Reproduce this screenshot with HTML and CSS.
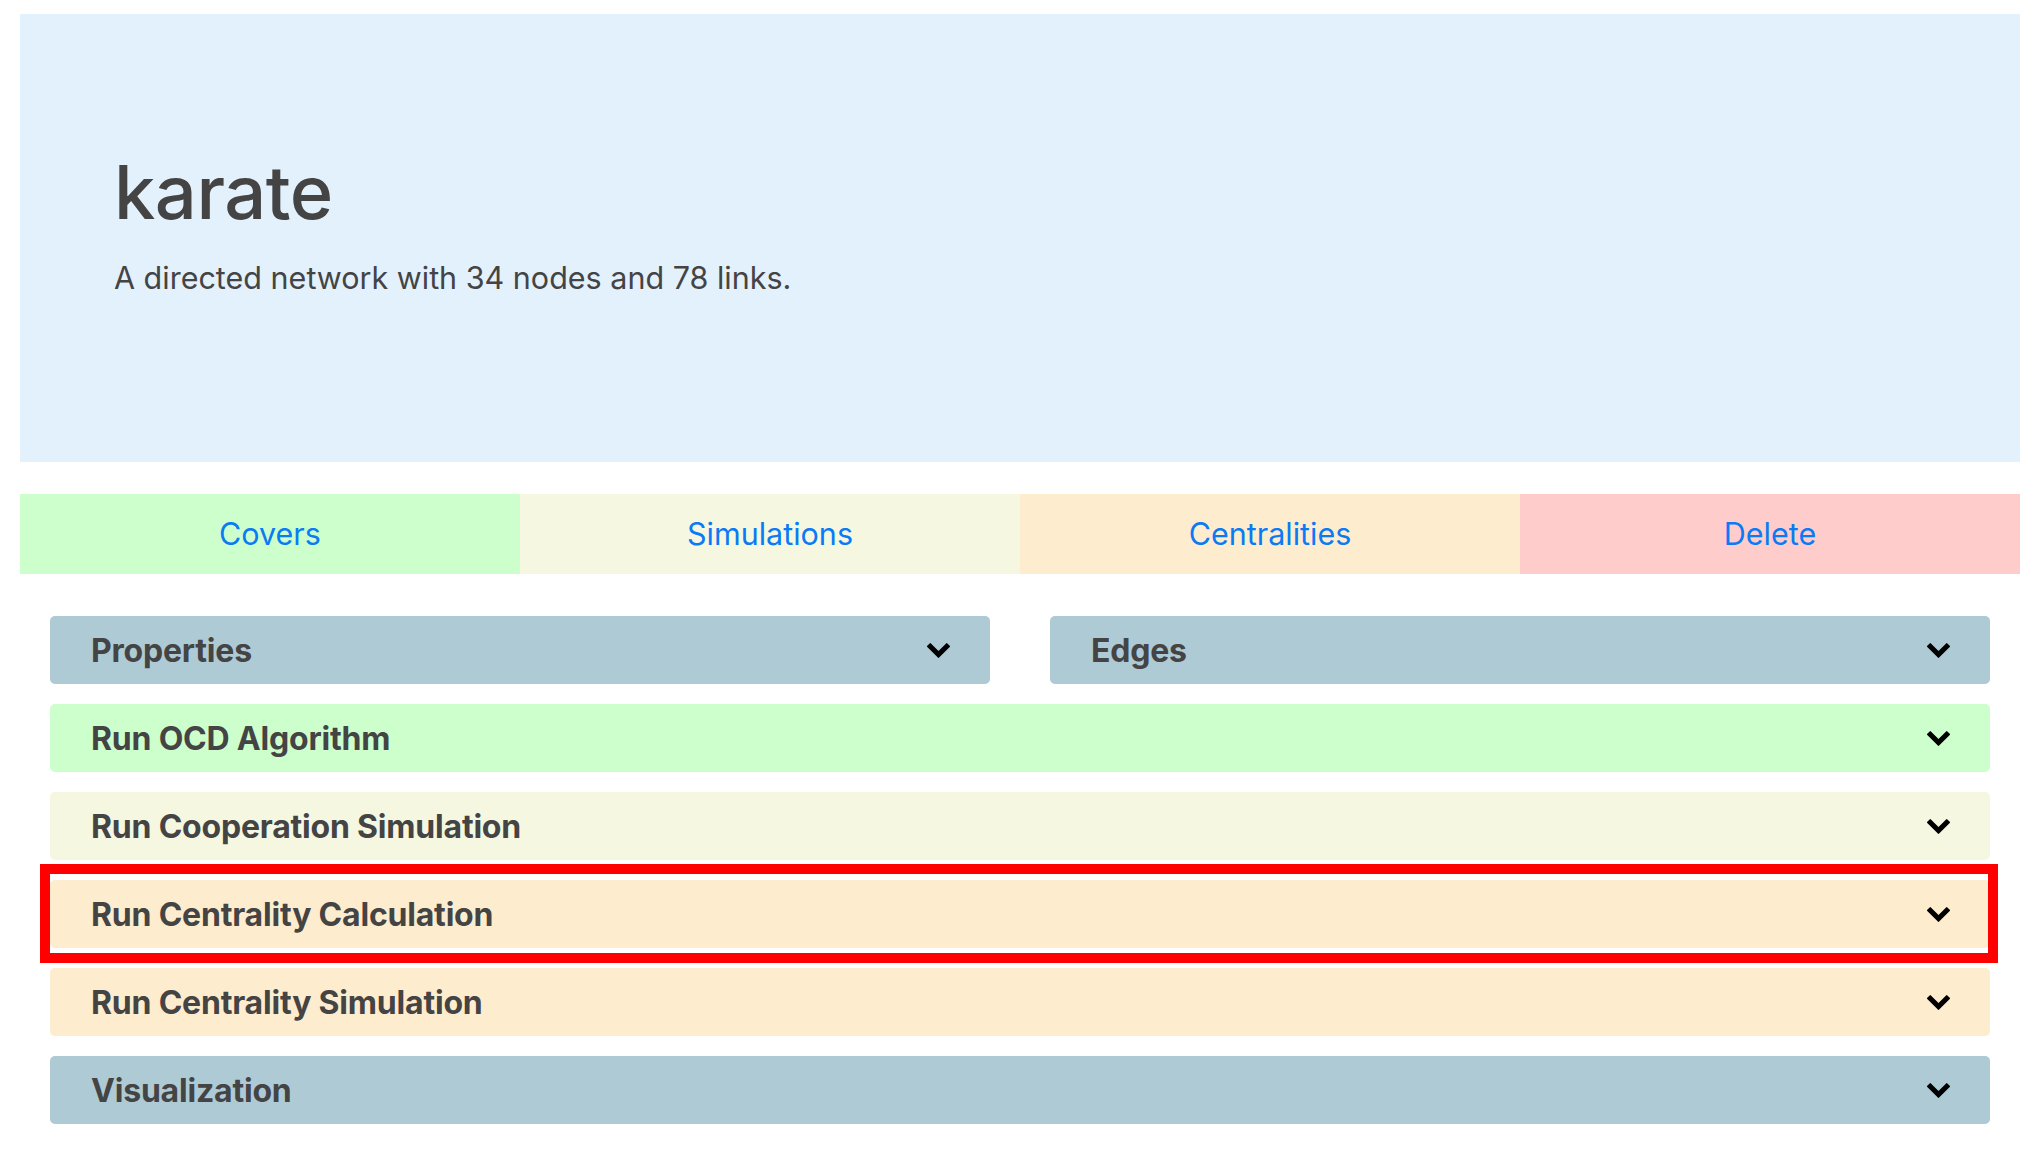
FILE: index.html
```html
<!DOCTYPE html>
<html lang="en">
<head>
<meta charset="utf-8">
<title>karate</title>
<link rel="stylesheet" href="styles.css">
</head>
<body>
<div class="page">
  <header class="jumbotron">
    <h1 class="title">karate</h1>
    <p class="lead">A directed network with 34 nodes and 78 links.</p>
  </header>

  <nav class="tabs">
    <a class="tab tab-covers" href="#">Covers</a>
    <a class="tab tab-sims" href="#">Simulations</a>
    <a class="tab tab-cent" href="#">Centralities</a>
    <a class="tab tab-delete" href="#">Delete</a>
  </nav>

  <main class="panels">
    <div class="pair">
      <div class="card card-grey"><span class="card-title">Properties</span><svg class="chev" viewBox="90 533 1612 1035"><path d="M1683 808l-742 741q-19 19-45 19t-45-19l-742-741q-19-19-19-45.5t19-45.5l166-165q19-19 45-19t45 19l531 531 531-531q19-19 45-19t45 19l166 165q19 19 19 45.5t-19 45.5z"/></svg></div>
      <div class="card card-grey"><span class="card-title">Edges</span><svg class="chev" viewBox="90 533 1612 1035"><path d="M1683 808l-742 741q-19 19-45 19t-45-19l-742-741q-19-19-19-45.5t19-45.5l166-165q19-19 45-19t45 19l531 531 531-531q19-19 45-19t45 19l166 165q19 19 19 45.5t-19 45.5z"/></svg></div>
    </div>
    <div class="card card-green"><span class="card-title">Run OCD Algorithm</span><svg class="chev" viewBox="90 533 1612 1035"><path d="M1683 808l-742 741q-19 19-45 19t-45-19l-742-741q-19-19-19-45.5t19-45.5l166-165q19-19 45-19t45 19l531 531 531-531q19-19 45-19t45 19l166 165q19 19 19 45.5t-19 45.5z"/></svg></div>
    <div class="card card-beige"><span class="card-title">Run Cooperation Simulation</span><svg class="chev" viewBox="90 533 1612 1035"><path d="M1683 808l-742 741q-19 19-45 19t-45-19l-742-741q-19-19-19-45.5t19-45.5l166-165q19-19 45-19t45 19l531 531 531-531q19-19 45-19t45 19l166 165q19 19 19 45.5t-19 45.5z"/></svg></div>
    <div class="card card-almond highlight"><span class="card-title">Run Centrality Calculation</span><svg class="chev" viewBox="90 533 1612 1035"><path d="M1683 808l-742 741q-19 19-45 19t-45-19l-742-741q-19-19-19-45.5t19-45.5l166-165q19-19 45-19t45 19l531 531 531-531q19-19 45-19t45 19l166 165q19 19 19 45.5t-19 45.5z"/></svg></div>
    <div class="card card-almond"><span class="card-title">Run Centrality Simulation</span><svg class="chev" viewBox="90 533 1612 1035"><path d="M1683 808l-742 741q-19 19-45 19t-45-19l-742-741q-19-19-19-45.5t19-45.5l166-165q19-19 45-19t45 19l531 531 531-531q19-19 45-19t45 19l166 165q19 19 19 45.5t-19 45.5z"/></svg></div>
    <div class="card card-grey"><span class="card-title">Visualization</span><svg class="chev" viewBox="90 533 1612 1035"><path d="M1683 808l-742 741q-19 19-45 19t-45-19l-742-741q-19-19-19-45.5t19-45.5l166-165q19-19 45-19t45 19l531 531 531-531q19-19 45-19t45 19l166 165q19 19 19 45.5t-19 45.5z"/></svg></div>
  </main>
</div>
</body>
</html>
```

FILE: styles.css
```css
html, body {
  margin: 0;
  padding: 0;
  background: #ffffff;
}

body {
  font-family: Inter, "Noto Sans", "Liberation Sans", sans-serif;
  color: #444444;
}

.page {
  width: 2000px;
  padding: 14px 0 48px 20px;
}

.jumbotron {
  background: #e3f1fc;
  height: 448px;
  box-sizing: border-box;
  padding: 133px 0 0 94px;
}

.title {
  margin: 0;
  font-size: 74px;
  line-height: 91px;
  font-weight: 500;
  letter-spacing: -0.5px;
  color: #444444;
}

.lead {
  margin: 17px 0 0 0;
  font-size: 30.5px;
  line-height: 45px;
  font-weight: 400;
  color: #444444;
}

.tabs {
  margin-top: 32px;
  display: grid;
  grid-template-columns: repeat(4, 1fr);
  height: 80px;
}

.tab {
  display: flex;
  align-items: center;
  justify-content: center;
  padding-bottom: 2px;
  font-size: 30.5px;
  color: #0a7bf5;
  text-decoration: none;
}

.tab-covers { background: #ccffcc; }
.tab-sims { background: #f5f7e1; }
.tab-cent { background: #feecce; }
.tab-delete { background: #ffcccc; }

.panels {
  margin-top: 42px;
  padding: 0 30px;
  display: flex;
  flex-direction: column;
  gap: 20px;
}

.pair {
  display: grid;
  grid-template-columns: 1fr 1fr;
  gap: 60px;
}

.card {
  height: 68px;
  box-sizing: border-box;
  border-radius: 5px;
  display: flex;
  align-items: center;
  justify-content: space-between;
  padding: 0 40px 0 41px;
}

.card-title {
  font-size: 32px;
  font-weight: 700;
  color: #444444;
  letter-spacing: -0.2px;
}

.chev {
  width: 23px;
  height: 15px;
  fill: #000000;
  flex: none;
}

.card-grey { background: #aecad5; }
.card-green { background: #ccffcc; }
.card-beige { background: #f5f7e1; }
.card-almond { background: #feecce; }

.highlight {
  position: relative;
}

.highlight::after {
  content: "";
  position: absolute;
  top: -16px;
  bottom: -15px;
  left: -10px;
  right: -8px;
  border: 10px solid #ff0000;
  pointer-events: none;
}
```
